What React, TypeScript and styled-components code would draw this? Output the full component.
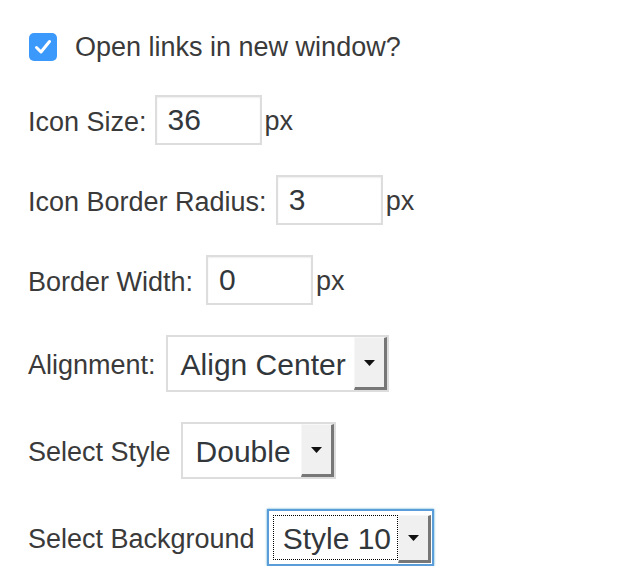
import React from "react";
import styled, { createGlobalStyle } from "styled-components";

const Global = createGlobalStyle`
  html, body { margin: 0; padding: 0; background: #ffffff; }
  body { font-family: "Liberation Sans", Arial, sans-serif; color: #3a3a3a; }
`;

const Form = styled.div`
  display: flex;
  flex-direction: column;
  gap: 30px;
  padding: 29px 0 0 28px;
`;

const Row = styled.div<{ $h?: number }>`
  display: flex;
  align-items: center;
  height: ${(p) => (p.$h ? `${p.$h}px` : "auto")};
`;

const Label = styled.span<{ $gap?: number }>`
  font-size: 27px;
  line-height: 1;
  padding-top: 4px;
  margin-right: ${(p) => p.$gap ?? 10}px;
  white-space: nowrap;
`;

const Unit = styled.span`
  font-size: 27px;
  line-height: 1;
  padding-top: 2px;
  margin-left: 3px;
`;

const CheckBox = styled.span`
  width: 28px;
  height: 28px;
  margin-left: 1px;
  margin-right: 18px;
  border-radius: 5px;
  background: #3b99fc;
  display: flex;
  align-items: center;
  justify-content: center;
  flex-shrink: 0;
`;

const CheckText = styled.span`
  font-size: 27px;
  line-height: 1;
  padding-top: 1px;
`;

const TextInput = styled.input`
  box-sizing: border-box;
  width: 107px;
  height: 50px;
  border: 2px solid #dddddd;
  box-shadow: inset 0 1px 2px rgba(0, 0, 0, 0.07);
  background: #fff;
  padding: 0 0 0 11px;
  margin: 0;
  font-family: "Liberation Sans", Arial, sans-serif;
  font-size: 30px;
  color: #32373c;
  outline: none;
`;

const SelectBox = styled.div<{ $w: number; $focused?: boolean }>`
  box-sizing: border-box;
  width: ${(p) => p.$w}px;
  height: 57px;
  display: flex;
  border: 2px solid ${(p) => (p.$focused ? "#5b9dd9" : "#dddddd")};
  box-shadow: ${(p) => (p.$focused ? "0 0 2px rgba(30,140,190,.8)" : "none")};
  background: #fff;
  padding: ${(p) => (p.$focused ? "4px 1px 1px 4px" : "0")};
`;

const SelectValue = styled.div<{ $focused?: boolean }>`
  flex: 1;
  display: flex;
  align-items: center;
  box-sizing: border-box;
  padding-left: ${(p) => (p.$focused ? "9px" : "13px")};
  padding-top: 2px;
  font-size: 30px;
  color: #32373c;
  white-space: nowrap;
  border: ${(p) => (p.$focused ? "1px dotted #000" : "none")};
  margin-bottom: ${(p) => (p.$focused ? "3px" : "0")};
`;

const ArrowButton = styled.div`
  box-sizing: border-box;
  width: 33px;
  flex-shrink: 0;
  background: #f0f0f0;
  border-style: solid;
  border-width: 1px 3px 3px 1px;
  border-color: #f7f7f7 #777777 #777777 #f7f7f7;
  display: flex;
  align-items: center;
  justify-content: center;
`;

const Caret = () => (
  <svg width="11" height="6" viewBox="0 0 11 6">
    <path d="M0 0 L11 0 L5.5 6 Z" fill="#111" />
  </svg>
);

const Tick = () => (
  <svg width="22" height="22" viewBox="0 0 22 22">
    <path
      d="M4.5 11.5 L9 16 L17.5 5.5"
      fill="none"
      stroke="#fff"
      strokeWidth="3"
      strokeLinecap="round"
      strokeLinejoin="round"
    />
  </svg>
);

const Select = ({ value, width, focused }: { value: string; width: number; focused?: boolean }) => (
  <SelectBox $w={width} $focused={focused}>
    <SelectValue $focused={focused}>{value}</SelectValue>
    <ArrowButton>
      <Caret />
    </ArrowButton>
  </SelectBox>
);

export default function App() {
  return (
    <>
      <Global />
      <Form>
        <Row $h={36}>
          <CheckBox>
            <Tick />
          </CheckBox>
          <CheckText>Open links in new window?</CheckText>
        </Row>
        <Row>
          <Label $gap={8}>Icon Size:</Label>
          <TextInput defaultValue="36" />
          <Unit>px</Unit>
        </Row>
        <Row>
          <Label $gap={9}>Icon Border Radius:</Label>
          <TextInput defaultValue="3" />
          <Unit>px</Unit>
        </Row>
        <Row>
          <Label $gap={13}>Border Width:</Label>
          <TextInput defaultValue="0" />
          <Unit>px</Unit>
        </Row>
        <Row>
          <Label>Alignment:</Label>
          <Select value="Align Center" width={223} />
        </Row>
        <Row>
          <Label>Select Style</Label>
          <Select value="Double" width={155} />
        </Row>
        <Row>
          <Label $gap={12}>Select Background</Label>
          <Select value="Style 10" width={167} focused />
        </Row>
      </Form>
    </>
  );
}
